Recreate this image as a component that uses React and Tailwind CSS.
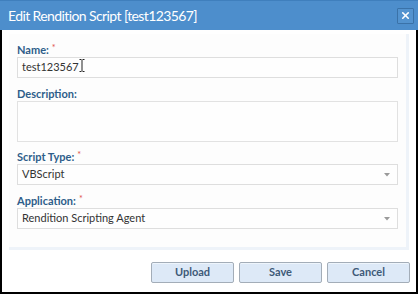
import { X } from "lucide-react";

const font = { fontFamily: "Lato, 'Open Sans', sans-serif" };

function Label({ text, className = "" }) {
  return (
    <div className={`h-[14px] leading-[14px] text-[11px] font-bold text-[#2e5d8a] ${className}`}>
      {text}
      <span className="ml-[3px] align-top text-[9px] font-normal leading-[10px] text-[#e0504a]">*</span>
    </div>
  );
}

function SelectBox({ value }) {
  return (
    <div className="flex h-[21px] items-center justify-between border border-[#dedede] bg-[#fefefe] pl-[4px] pr-[7px] text-[11px] text-[#333]">
      <span>{value}</span>
      <svg width="6" height="4" viewBox="0 0 6 4">
        <path d="M0 0h6L3 3.5z" fill="#9a9a9a" />
      </svg>
    </div>
  );
}

export default function App() {
  return (
    <div className="h-[295px] w-[419px] bg-white" style={font}>
      <div className="flex h-[30px] w-[418px] items-center justify-between border-t border-[#3f7fbd] bg-[#4d8ecc] pl-[8px] pr-[4px]">
        <span className="text-[14px] leading-none tracking-[-0.6px] text-white">Edit Rendition Script [test123567]</span>
        <div className="flex h-[16px] w-[17px] items-center justify-center rounded-[1px] border border-[#3a72a8] bg-[#5393cf]">
          <X size={11} strokeWidth={3.5} color="white" />
        </div>
      </div>

      <div className="flex h-[264px] w-[418px] flex-col border-x-2 border-b-2 border-black bg-white">
        {/* Form panel */}
        <div className="ml-[7px] mr-[7px] mt-[4px] h-[216px] border-r-[3px] border-b-[3px] border-[#eef3f9] bg-[#fdfdfd] px-[8px] pt-[9px]">
          <Label text="Name:" />
          <div className="relative flex h-[21px] items-center border border-[#dedede] bg-[#fefefe] pl-[4px] text-[11px] text-[#333]">
            test123567
            <svg className="absolute left-[61px] top-[1px]" width="6" height="13" viewBox="0 0 6 13">
              <path d="M0.5 0.5h2M3.5 0.5h2M3 1v11M0.5 12.5h2M3.5 12.5h2" stroke="#222" strokeWidth="1" fill="none" />
            </svg>
          </div>

          <div className="mt-[9px] h-[14px] leading-[14px] text-[11px] font-bold text-[#2e5d8a]">Description:</div>
          <div className="h-[41px] border border-[#e2e2e2] bg-[#fefefe]" />

          <Label text="Script Type:" className="mt-[8px]" />
          <SelectBox value="VBScript" />

          <Label text="Application:" className="mt-[9px]" />
          <SelectBox value="Rendition Scripting Agent" />
        </div>

        {/* Footer buttons */}
        <div className="mt-[12px] flex justify-end gap-[5px] pr-[6px]">
          {["Upload", "Save", "Cancel"].map((b) => (
            <button
              key={b}
              className="h-[21px] w-[83px] rounded-[2px] border border-[#a3adb8] bg-[#dde9f7] text-[11px] font-bold text-[#3d5a78] shadow-[inset_0_1px_0_#eef5fc]"
            >
              {b}
            </button>
          ))}
        </div>
      </div>
    </div>
  );
}
